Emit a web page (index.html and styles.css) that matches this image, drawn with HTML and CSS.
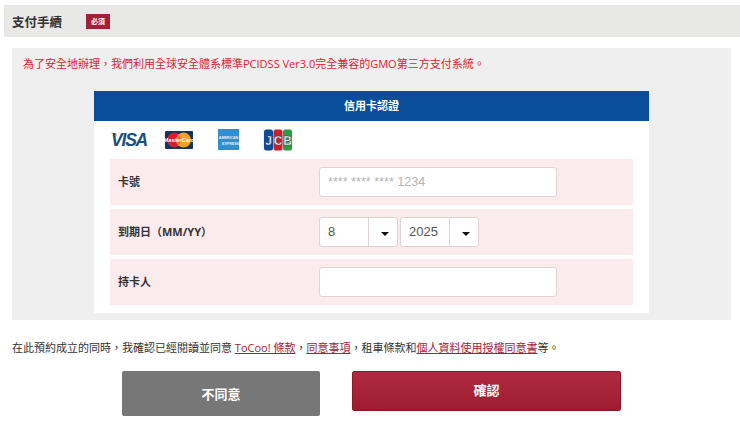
FILE: index.html
```html
<!DOCTYPE html>
<html lang="zh-Hant">
<head>
<meta charset="utf-8">
<title>支付手續</title>
<link rel="stylesheet" href="styles.css">
</head>
<body>
<div class="heading">
  <h2 class="heading-title">支付手續</h2>
  <span class="badge">必須</span>
</div>
<section class="panel">
  <p class="notice">為了安全地辦理，我們利用全球安全體系標準PCIDSS Ver3.0完全兼容的GMO第三方支付系統。</p>
  <div class="card">
    <div class="card-head">信用卡認證</div>
    <div class="card-body">
      <div class="logos">
        <svg class="logo-visa" width="42" height="18" viewBox="0 0 42 18"><path d="M0 2C3.500 2 6 3.500 7.500 6.500L6.200 2.600C5 1.600 2 1.400 0 2Z" fill="#e0a63a"/><text x="1" y="15" class="visa-text">VISA</text></svg>
        <svg class="logo-mc" width="28" height="18" viewBox="0 0 28 18"><rect width="28" height="18" rx="1" fill="#14315f"/><circle cx="9.500" cy="9" r="7.500" fill="#d3202f"/><circle cx="18.500" cy="9" r="7.500" fill="#efa429"/><path d="M14 3.900a7.500 7.500 0 0 1 0 10.200a7.500 7.500 0 0 1 0-10.200Z" fill="#e86a2b"/><text x="14" y="11" class="mc-text">MasterCard</text></svg>
        <svg class="logo-amex" width="21" height="21" viewBox="0 0 21 21"><rect width="21" height="21" fill="#2f8fd0"/><text x="10.500" y="9.800" class="amex-text">AMERICAN</text><text x="12.500" y="15.500" class="amex-text">EXPRESS</text></svg>
        <svg class="logo-jcb" width="30" height="22" viewBox="0 0 30 22"><rect width="30" height="22" fill="#f1f1f1"/><rect x="1" y="0.500" width="9" height="21" rx="2.500" fill="#0f4a97"/><rect x="10.500" y="0.500" width="9" height="21" rx="2.500" fill="#c9202f"/><rect x="20" y="0.500" width="9" height="21" rx="2.500" fill="#2f9c45"/><text x="5.500" y="15.500" class="jcb-text">J</text><text x="15" y="15.500" class="jcb-text">C</text><text x="24.500" y="15.500" class="jcb-text">B</text></svg>
      </div>
      <div class="row">
        <label class="row-label" for="card-no">卡號</label>
        <div class="row-field"><input class="text-input" id="card-no" type="text" placeholder="**** **** **** 1234"></div>
      </div>
      <div class="row">
        <span class="row-label">到期日（MM/YY）</span>
        <div class="row-field selects">
          <div class="select select-month"><span class="select-value">8</span><span class="select-arrow"></span></div>
          <div class="select select-year"><span class="select-value">2025</span><span class="select-arrow"></span></div>
        </div>
      </div>
      <div class="row">
        <label class="row-label" for="holder">持卡人</label>
        <div class="row-field"><input class="text-input" id="holder" type="text"></div>
      </div>
    </div>
  </div>
</section>
<p class="terms">在此預約成立的同時，我確認已經閱讀並同意 <a href="#">ToCoo! 條款</a>，<a href="#">同意事項</a>，租車條款和<a href="#">個人資料使用授權同意書</a>等。</p>
<div class="actions">
  <button class="btn btn-decline" type="button">不同意</button>
  <button class="btn btn-confirm" type="button">確認</button>
</div>
</body>
</html>
```
FILE: styles.css
```css
* { box-sizing: border-box; }
html, body { margin: 0; padding: 0; }
body {
  width: 740px;
  height: 425px;
  overflow: hidden;
  background: #fff;
  color: #333;
  font-family: "Open Sans", "Noto Sans CJK JP", sans-serif;
  font-size: 11px;
  padding-top: 5px;
}
.heading {
  margin-left: 4px;
  height: 32px;
  background: #e8e8e6;
  display: flex;
  align-items: center;
  padding-left: 8px;
}
.heading-title {
  margin: 0;
  width: 74px;
  font-size: 12.500px;
  font-weight: 700;
  color: #333;
}
.badge {
  width: 24px;
  height: 15px;
  background: #a3203a;
  color: #fff;
  font-size: 7px;
  font-weight: 700;
  display: flex;
  align-items: center;
  justify-content: center;
}
.panel {
  margin: 11px 9px 0 12px;
  height: 272px;
  background: #efefef;
  padding-top: 8px;
}
.notice {
  margin: 0 0 0 11px;
  height: 35px;
  line-height: 15px;
  color: #dc2430;
  font-size: 11px;
}
.card {
  margin-left: 82px;
  width: 555px;
  height: 222px;
  background: #fff;
}
.card-head {
  height: 30px;
  padding-bottom: 3px;
  background: #0a4e9b;
  color: #fff;
  font-size: 11px;
  font-weight: 700;
  display: flex;
  align-items: center;
  justify-content: center;
}
.card-body { padding: 0 16px; }
.logos {
  height: 38px;
  padding-bottom: 1px;
  display: flex;
  align-items: center;
}
.logo-visa { margin-right: 13px; }
.logo-mc { margin-right: 25px; }
.logo-amex { margin-right: 24px; }
.visa-text {
  font-family: "Liberation Sans", sans-serif;
  font-size: 17.500px;
  font-weight: 700;
  font-style: italic;
  letter-spacing: -1.200px;
  fill: #1a4f7c;
}
.mc-text {
  font-family: "Liberation Sans", sans-serif;
  font-size: 5.600px;
  font-weight: 700;
  font-style: italic;
  text-anchor: middle;
  fill: #fff;
}
.amex-text {
  font-family: "Liberation Sans", sans-serif;
  font-size: 3.600px;
  font-weight: 700;
  text-anchor: middle;
  fill: #e4f2fb;
}
.jcb-text {
  font-family: "Liberation Sans", sans-serif;
  font-size: 12px;
  font-weight: 700;
  text-anchor: middle;
  fill: #fff;
  stroke: #26384f;
  stroke-width: 0.400px;
}
.row {
  height: 46px;
  margin-bottom: 4px;
  background: #fcebec;
  display: flex;
  align-items: center;
}
.row-label {
  width: 209px;
  padding-left: 8px;
  padding-bottom: 3px;
  font-size: 11px;
  font-weight: 700;
  color: #333;
}
.row-field { display: flex; }
.text-input {
  width: 238px;
  height: 30px;
  border: 1px solid #ddd3d3;
  border-radius: 3px;
  background: #fff;
  padding: 0 8px;
  font-family: "Liberation Sans", sans-serif;
  font-size: 12.600px;
  color: #555;
}
.text-input::placeholder { color: #b5b5b5; opacity: 1; }
.selects { gap: 2px; }
.select {
  height: 30px;
  border: 1px solid #ddd3d3;
  border-radius: 3px;
  background: #fff;
  display: flex;
  font-family: "Liberation Sans", sans-serif;
  font-size: 13px;
  color: #555;
}
.select-month { width: 79px; }
.select-year { width: 79px; }
.select-value {
  flex: 1;
  padding-left: 8px;
  line-height: 27px;
  border-right: 1px solid #ddd3d3;
}
.select-arrow {
  width: 28px;
  position: relative;
}
.select-arrow::after {
  content: "";
  position: absolute;
  left: 12px;
  top: 14px;
  border-left: 4px solid transparent;
  border-right: 4px solid transparent;
  border-top: 4px solid #111;
}
.terms {
  margin: 20px 0 0 12px;
  line-height: 15px;
  font-size: 11px;
  color: #333;
}
.terms a { color: #a3203a; text-decoration: underline; }
.actions {
  margin: 16px 0 0 122px;
  display: flex;
  gap: 32px;
  align-items: flex-start;
}
.btn {
  border: 0;
  border-radius: 2px;
  color: #fff;
  font-family: inherit;
  font-weight: 700;
  font-size: 13px;
  padding: 0;
}
.btn-decline {
  width: 198px;
  height: 45px;
  background: #777;
}
.btn-confirm {
  width: 269px;
  height: 40px;
  padding-bottom: 4px;
  background: linear-gradient(#b02a40, #9f1c30);
  border: 1px solid #8e1729;
}
```
